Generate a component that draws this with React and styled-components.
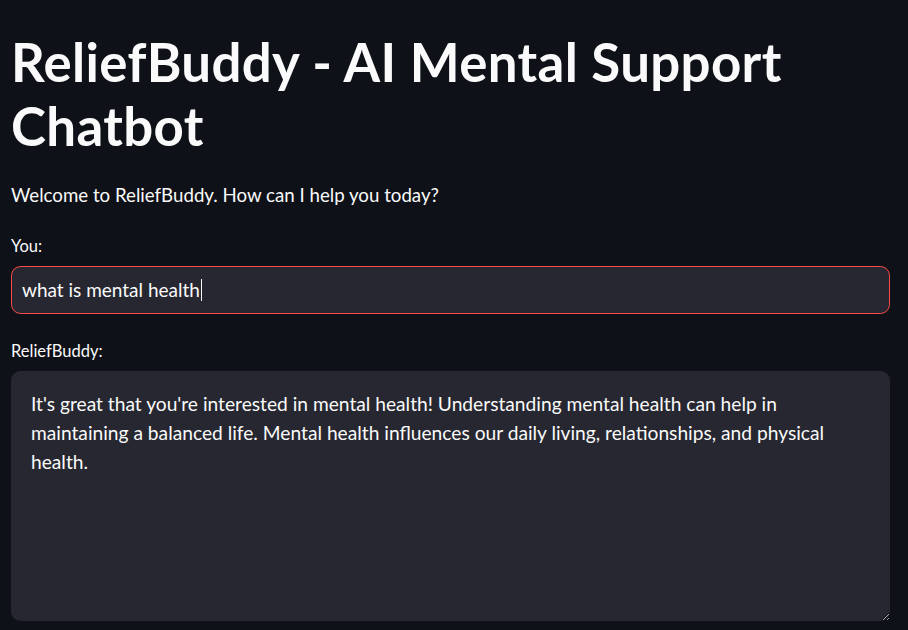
import styled, { createGlobalStyle } from "styled-components";

const GlobalStyle = createGlobalStyle`
  html, body {
    margin: 0;
    padding: 0;
    background: #0e1117;
    color-scheme: dark;
  }
  body {
    font-family: Lato, "Noto Sans", sans-serif;
    color: #fafafa;
  }
`;

const Main = styled.main`
  padding: 0 18px 0 11px;
  display: flex;
  flex-direction: column;
`;

const Title = styled.h1`
  margin: 0;
  padding: 30px 0 22px;
  font-size: 52.8px;
  font-weight: 700;
  line-height: 1.22;
  letter-spacing: 0.35px;
`;

const Text = styled.p`
  margin: 0 0 26px;
  font-size: 18.7px;
  line-height: 1.5;
`;

const Label = styled.label`
  display: block;
  font-size: 16.5px;
  line-height: 1.4;
  margin-bottom: 8px;
`;

const Field = styled.div`
  display: flex;
  flex-direction: column;
  margin-bottom: ${(p) => p.$gap || 0}px;
`;

const InputBox = styled.div`
  height: 48px;
  box-sizing: border-box;
  border: 1px solid #ff4b4b;
  border-radius: 9.6px;
  background: #262730;
  padding: 0 10px;
  display: flex;
  align-items: center;
  font-size: 19px;
`;

const Caret = styled.span`
  display: inline-block;
  width: 1px;
  height: 22px;
  background: #fafafa;
  margin-left: 1px;
`;

const Area = styled.textarea`
  height: 250px;
  box-sizing: border-box;
  border: none;
  border-radius: 9.6px;
  background: #262730;
  color: #fafafa;
  padding: 19px 20px;
  font-family: Lato, "Noto Sans", sans-serif;
  font-size: 19.2px;
  line-height: 1.5;
  resize: vertical;
  outline: none;
`;

export default function App() {
  return (
    <>
      <GlobalStyle />
      <Main>
        <Title>ReliefBuddy - AI Mental Support Chatbot</Title>
        <Text>Welcome to ReliefBuddy. How can I help you today?</Text>
        <Field $gap={26}>
          <Label>You:</Label>
          <InputBox>
            <span>what is mental health</span>
            <Caret />
          </InputBox>
        </Field>
        <Field>
          <Label>ReliefBuddy:</Label>
          <Area
            readOnly
            defaultValue="It's great that you're interested in mental health! Understanding mental health can help in maintaining a balanced life. Mental health influences our daily living, relationships, and physical health."
          />
        </Field>
      </Main>
    </>
  );
}
